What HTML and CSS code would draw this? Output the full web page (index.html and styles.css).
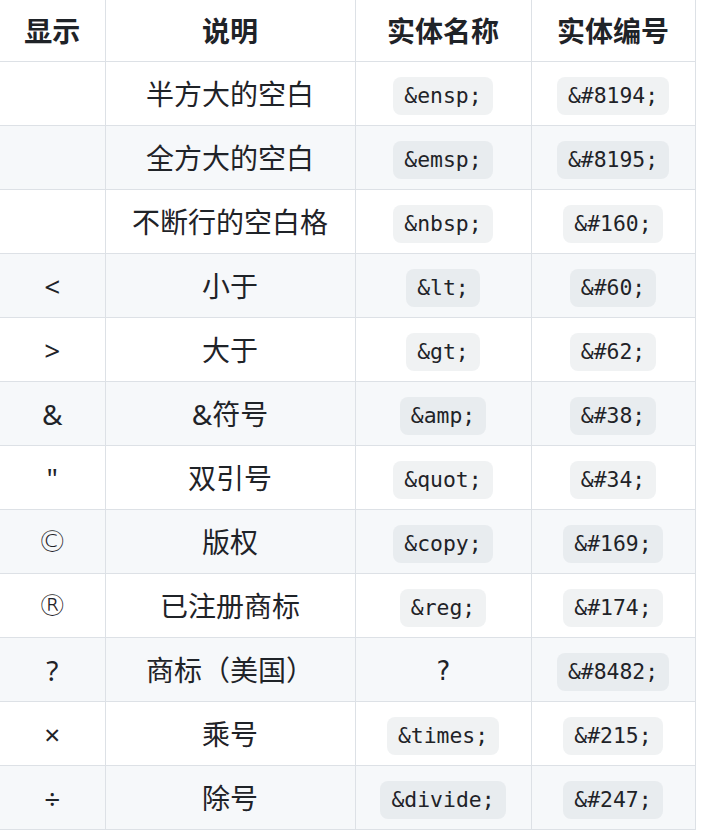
FILE: index.html
```html
<!DOCTYPE html>
<html lang="zh">
<head>
<meta charset="utf-8">
<link rel="stylesheet" href="styles.css">
</head>
<body>
<table class="entities">
  <colgroup>
    <col class="c1"><col class="c2"><col class="c3"><col class="c4">
  </colgroup>
  <thead>
    <tr><th>显示</th><th>说明</th><th>实体名称</th><th>实体编号</th></tr>
  </thead>
  <tbody>
    <tr><td></td><td>半方大的空白</td><td><code>&amp;ensp;</code></td><td><code>&amp;#8194;</code></td></tr>
    <tr><td></td><td>全方大的空白</td><td><code>&amp;emsp;</code></td><td><code>&amp;#8195;</code></td></tr>
    <tr><td></td><td>不断行的空白格</td><td><code>&amp;nbsp;</code></td><td><code>&amp;#160;</code></td></tr>
    <tr><td>&lt;</td><td>小于</td><td><code>&amp;lt;</code></td><td><code>&amp;#60;</code></td></tr>
    <tr><td>&gt;</td><td>大于</td><td><code>&amp;gt;</code></td><td><code>&amp;#62;</code></td></tr>
    <tr><td>&amp;</td><td>&amp;符号</td><td><code>&amp;amp;</code></td><td><code>&amp;#38;</code></td></tr>
    <tr><td>"</td><td>双引号</td><td><code>&amp;quot;</code></td><td><code>&amp;#34;</code></td></tr>
    <tr><td class="sym">©</td><td>版权</td><td><code>&amp;copy;</code></td><td><code>&amp;#169;</code></td></tr>
    <tr><td class="sym">®</td><td>已注册商标</td><td><code>&amp;reg;</code></td><td><code>&amp;#174;</code></td></tr>
    <tr><td>?</td><td>商标（美国）</td><td><span class="plain-mono">?</span></td><td><code>&amp;#8482;</code></td></tr>
    <tr><td>×</td><td>乘号</td><td><code>&amp;times;</code></td><td><code>&amp;#215;</code></td></tr>
    <tr><td>÷</td><td>除号</td><td><code>&amp;divide;</code></td><td><code>&amp;#247;</code></td></tr>
  </tbody>
</table>
</body>
</html>
```
FILE: styles.css
```css
html, body {
  margin: 0;
  padding: 0;
  background: #ffffff;
}

body {
  font-family: "Noto Sans", "Noto Sans CJK SC", sans-serif;
  color: #1f2328;
  font-size: 28px;
}

.entities {
  border-collapse: collapse;
  table-layout: fixed;
  width: 695px;
}

.c1 { width: 105px; }
.c2 { width: 250px; }
.c3 { width: 176px; }
.c4 { width: 164px; }

.entities th,
.entities td {
  border: 1px solid #dde1e6;
  padding: 0 8px;
  text-align: center;
  vertical-align: middle;
  white-space: nowrap;
  line-height: 36px;
}

.entities th {
  border-top: none;
  height: 61px;
  font-weight: 700;
}

.entities td {
  height: 63px;
}

.entities tr > :first-child {
  border-left: none;
}

.entities tbody td.sym {
  font-family: "DejaVu Sans", "Noto Sans", sans-serif;
  font-weight: 200;
  font-size: 30px;
}

.entities tbody tr:nth-child(2n) {
  background: #f6f8fa;
}

code {
  font-family: "DejaVu Sans Mono", "Liberation Mono", monospace;
  font-size: 21.4px;
  display: inline-block;
  vertical-align: -1px;
  line-height: 30px;
  padding: 4px 11px;
  border-radius: 8px;
  background: rgba(175, 184, 193, 0.19);
}

.plain-mono {
  font-family: "DejaVu Sans Mono", "Liberation Mono", monospace;
  font-size: 26px;
}
```
